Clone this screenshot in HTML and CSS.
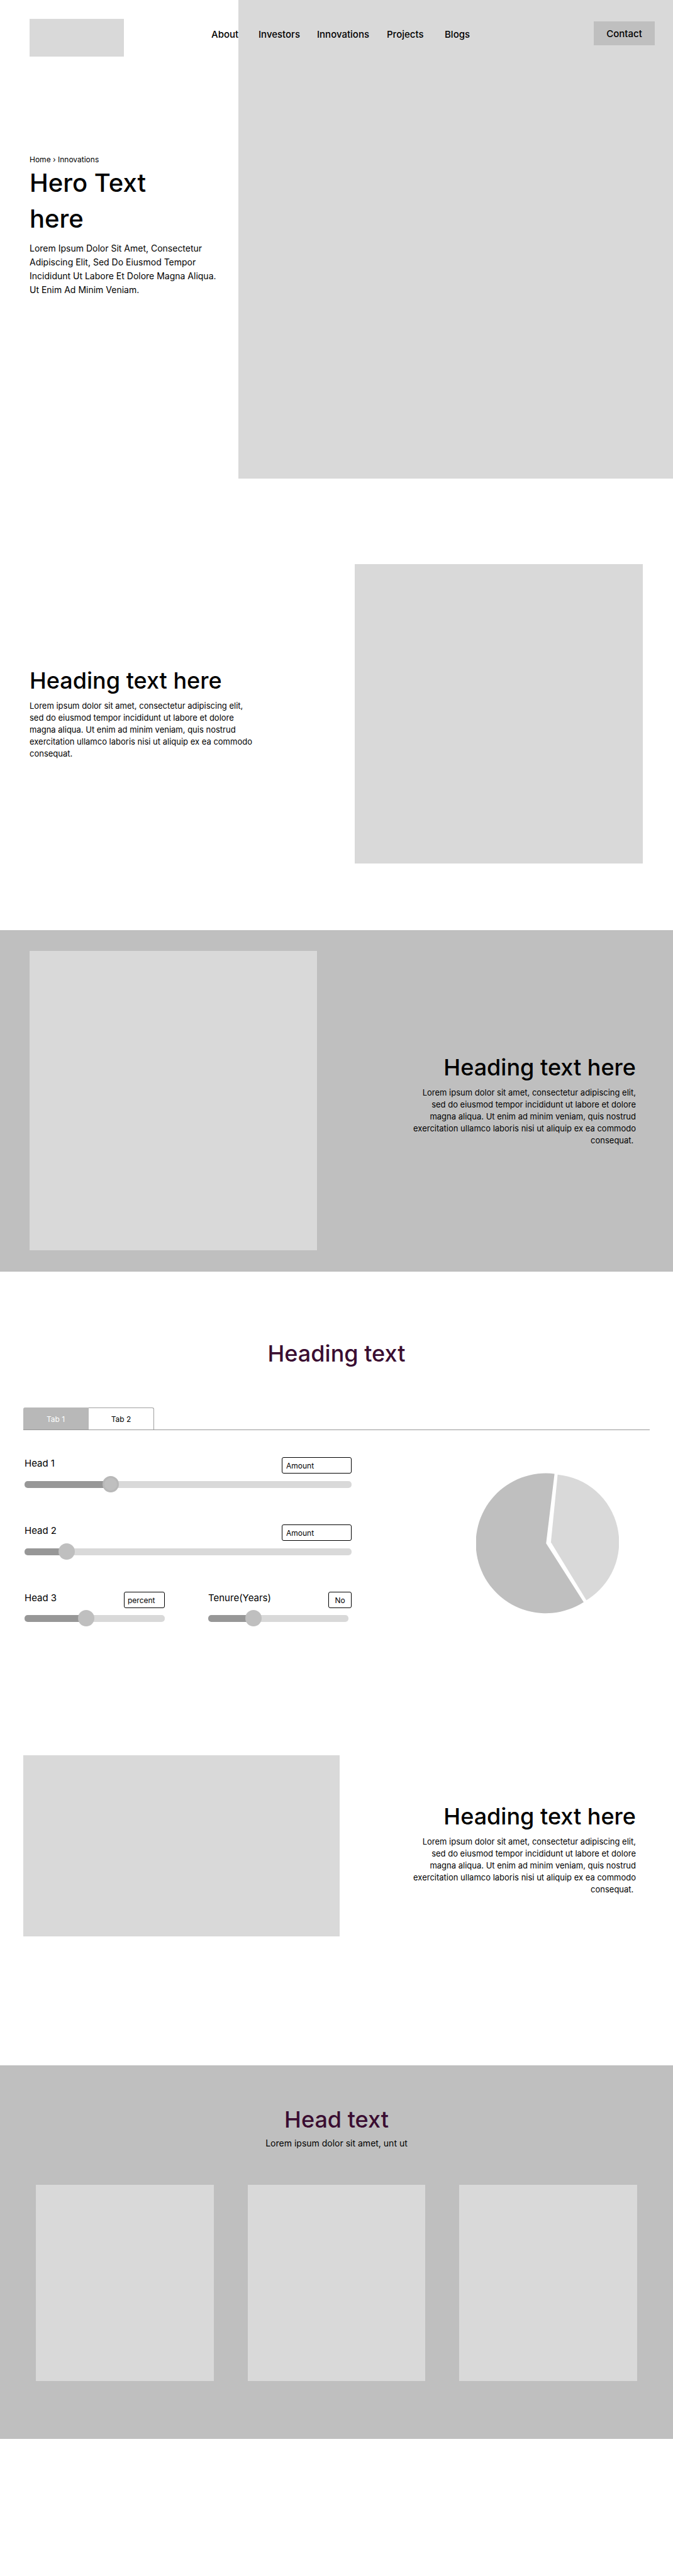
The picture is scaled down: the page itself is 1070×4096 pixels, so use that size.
FILE: index.html
```html
<!DOCTYPE html>
<html lang="en">
<head>
<meta charset="utf-8">
<meta name="viewport" content="width=device-width, initial-scale=1">
<title>Innovations</title>
<link rel="stylesheet" href="styles.css">
</head>
<body>
<div class="top">
  <header class="header">
    <div class="logo"></div>
    <nav class="nav">
      <a href="#">About</a>
      <a href="#">Investors</a>
      <a href="#">Innovations</a>
      <a href="#">Projects</a>
      <a href="#">Blogs</a>
    </nav>
    <button class="contact" type="button">Contact</button>
  </header>
  <section class="hero">
    <div class="hero-text">
      <p class="crumbs"><a href="#">Home</a> › <a href="#">Innovations</a></p>
      <h1>Hero Text<br>here</h1>
      <p class="lead">Lorem Ipsum Dolor Sit Amet, Consectetur<br>Adipiscing Elit, Sed Do Eiusmod Tempor<br>Incididunt Ut Labore Et Dolore Magna Aliqua.<br>Ut Enim Ad Minim Veniam.</p>
    </div>
    <div class="hero-media"></div>
  </section>
</div>

<section class="split split-intro">
  <div class="copy">
    <h2>Heading text here</h2>
    <p>Lorem ipsum dolor sit amet, consectetur adipiscing elit,<br>sed do eiusmod tempor incididunt ut labore et dolore<br>magna aliqua. Ut enim ad minim veniam, quis nostrud<br>exercitation ullamco laboris nisi ut aliquip ex ea commodo<br>consequat.</p>
  </div>
  <div class="media media-tall"></div>
</section>

<section class="split split-band">
  <div class="media media-tall"></div>
  <div class="copy copy-end">
    <h2>Heading text here</h2>
    <p>Lorem ipsum dolor sit amet, consectetur adipiscing elit,<br>sed do eiusmod tempor incididunt ut labore et dolore<br>magna aliqua. Ut enim ad minim veniam, quis nostrud<br>exercitation ullamco laboris nisi ut aliquip ex ea commodo<br>consequat.&nbsp;</p>
  </div>
</section>

<section class="calculator">
  <h2 class="accent">Heading text</h2>
  <div class="tabs" role="tablist">
    <button class="tab tab-active" type="button" role="tab" aria-selected="true">Tab 1</button>
    <button class="tab" type="button" role="tab" aria-selected="false">Tab 2</button>
  </div>
  <div class="panel">
    <form class="fields">
      <div class="field">
        <label for="head1">Head 1</label>
        <input class="box" type="text" value="Amount" aria-label="Head 1 amount">
        <input class="range range-ring" id="head1" type="range" value="25" style="--fill: 25%">
      </div>
      <div class="field">
        <label for="head2">Head 2</label>
        <input class="box" type="text" value="Amount" aria-label="Head 2 amount">
        <input class="range" id="head2" type="range" value="11" style="--fill: 11%">
      </div>
      <div class="pair">
        <div class="field">
          <label for="head3">Head 3</label>
          <input class="box box-percent" type="text" value="percent" aria-label="Head 3 percent">
          <input class="range" id="head3" type="range" value="43" style="--fill: 43%">
        </div>
        <div class="field field-tenure">
          <label for="tenure">Tenure(Years)</label>
          <input class="box box-years" type="text" value="No" aria-label="Tenure in years">
          <input class="range" id="tenure" type="range" value="30" style="--fill: 30%">
        </div>
      </div>
    </form>
    <svg class="pie" viewBox="59 112 306 302" role="img" aria-label="Pie chart">
      <path fill="#bfbfbf" d="M209 263 L227 114 A150 150 0 1 0 289.5 389 Z"/>
      <path fill="#d9d9d9" d="M219.3 260.7 L233.7 115.7 A145.5 145.5 0 0 1 295.3 385 Z"/>
    </svg>
  </div>
</section>

<section class="split split-feature">
  <div class="media media-wide"></div>
  <div class="copy copy-end">
    <h2>Heading text here</h2>
    <p>Lorem ipsum dolor sit amet, consectetur adipiscing elit,<br>sed do eiusmod tempor incididunt ut labore et dolore<br>magna aliqua. Ut enim ad minim veniam, quis nostrud<br>exercitation ullamco laboris nisi ut aliquip ex ea commodo<br>consequat.&nbsp;</p>
  </div>
</section>

<section class="cards-band">
  <h2 class="accent">Head text</h2>
  <p>Lorem ipsum dolor sit amet, unt ut</p>
  <div class="cards">
    <div class="card"></div>
    <div class="card"></div>
    <div class="card"></div>
  </div>
</section>
</body>
</html>
```
FILE: styles.css
```css
* { box-sizing: border-box; }

body {
  margin: 0;
  padding-bottom: 218px;
  background: #fff;
  color: #000;
  font-family: Inter, "Liberation Sans", sans-serif;
  font-size: 13px;
  line-height: 19px;
}

h1, h2, p { margin: 0; font-weight: 400; }
a { color: inherit; text-decoration: none; }
button, input { font: inherit; color: inherit; }

h2 {
  font-size: 36px;
  font-weight: 500;
  line-height: 48px;
}
.accent { color: #3a0d31; text-align: center; }

/* Header and hero share one grid cell, the header on top */
.top { display: grid; }
.header, .hero { grid-area: 1 / 1; }

.header {
  z-index: 1;
  align-self: start;
  display: flex;
  align-items: flex-start;
  padding: 30px 29px 0 47px;
}
.logo {
  width: 150px;
  height: 60px;
  background: #d9d9d9;
}
.nav {
  display: grid;
  grid-template-columns: 75px 93px 111px 92px auto;
  margin: 15px auto 0 139px;
  font-size: 15px;
  font-weight: 500;
  line-height: 20px;
}
.contact {
  width: 97px;
  height: 38px;
  margin-top: 4px;
  padding: 0;
  border: 0;
  background: #bfbfbf;
  font-size: 15px;
  font-weight: 500;
}

.hero {
  display: grid;
  grid-template-columns: 379fr 691fr;
  min-height: 761px;
}
.hero-text { padding: 245px 0 0 47px; white-space: nowrap; }
.hero-media { background: #d9d9d9; }
.crumbs { font-size: 12px; line-height: 17px; }
h1 {
  font-size: 40px;
  font-weight: 500;
  line-height: 57px;
}
.lead {
  margin-top: 8px;
  font-size: 14px;
  line-height: 22px;
}

/* Text beside a picture */
.split { display: grid; align-items: center; }
.media { background: #d9d9d9; }
.media-tall { height: 476px; }
.media-wide { height: 288px; }
.copy { padding-bottom: 4px; white-space: nowrap; }
.copy p { margin-top: 7px; }
.copy-end { text-align: right; }

.split-intro {
  grid-template-columns: 517fr 458fr;
  padding: 136px 48px 106px 47px;
}
.split-band {
  grid-template-columns: 457fr 507fr;
  padding: 33px 59px 34px 47px;
  background: #bfbfbf;
}
.split-feature {
  grid-template-columns: 503fr 471fr;
  padding: 0 59px 205px 37px;
}
.split-feature .copy { padding-top: 12px; }

/* Calculator */
.calculator { padding: 106px 37px 205px; }
.tabs {
  display: flex;
  margin-top: 62px;
  border-bottom: 1px solid #979797;
}
.tab {
  width: 104px;
  height: 35px;
  padding: 0;
  border: 1px solid #a0a0a0;
  border-bottom: 0;
  border-left: 0;
  border-radius: 0 3px 0 0;
  background: #fff;
  font-size: 12px;
}
.tab-active {
  border-color: #b8b8b8;
  border-radius: 3px 0 0 0;
  background: #b8b8b8;
  color: #fff;
}

.panel {
  display: flex;
  justify-content: space-between;
  align-items: flex-start;
  padding: 43px 49px 0 2px;
}
.fields {
  display: grid;
  gap: 51px;
  flex: 0 1 520px;
}
.field {
  display: grid;
  grid-template-columns: 1fr auto;
  row-gap: 4px;
}
.field label { font-size: 15px; line-height: 20px; }
.box {
  width: 111px;
  height: 26px;
  padding: 0 6px;
  border: 1px solid #000;
  border-radius: 3px;
  background: #fff;
  font-size: 12px;
}
.box-percent { width: 65px; padding: 0 5px; }
.box-years { width: 37px; padding: 0; text-align: center; }
.pair {
  display: grid;
  grid-template-columns: 223fr 228fr;
  column-gap: 69px;
}
.pair .field { row-gap: 3px; }
.field-tenure .range { width: 223px; }

.range {
  grid-column: 1 / -1;
  width: 100%;
  height: 26px;
  margin: 0;
  appearance: none;
  background: none;
}
.range::-webkit-slider-runnable-track {
  height: 11px;
  border-radius: 5px;
  background: linear-gradient(to right, #979797 var(--fill), #d9d9d9 var(--fill));
}
.range::-webkit-slider-thumb {
  appearance: none;
  width: 26px;
  height: 26px;
  margin-top: -8px;
  border: 0;
  border-radius: 50%;
  background: #bfbfbf;
}
.range-ring::-webkit-slider-thumb { border: 3px solid #b8b8b8; }

.pie { width: 227px; margin-top: 25px; }

/* Cards */
.cards-band {
  padding: 62px 57px 92px;
  background: #bfbfbf;
  text-align: center;
}
.cards-band p { margin-top: 4px; font-size: 14px; line-height: 20px; }
.cards {
  display: grid;
  grid-template-columns: repeat(3, 1fr);
  gap: 54px;
  margin-top: 56px;
}
.card { height: 312px; background: #d9d9d9; }
```
